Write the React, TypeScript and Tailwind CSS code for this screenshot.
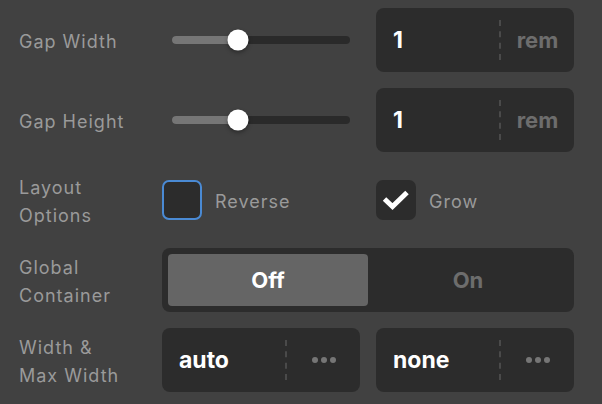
import React, { useState } from "react";

const Label: React.FC<{ children: React.ReactNode }> = ({ children }) => (
  <div className="w-[162px] shrink-0 pl-[19px] pt-[4px] text-[18px] leading-[28px] tracking-[1px] text-[#9a9a9a]">
    {children}
  </div>
);

const Slider: React.FC<{ value: number }> = ({ value }) => (
  <div className="relative mx-[10px] h-[8px] flex-1 rounded-full bg-[#2a2a2a]">
    <div
      className="absolute left-0 top-0 h-full rounded-full bg-[#767676]"
      style={{ width: `${value}%` }}
    />
    <div
      className="absolute top-1/2 h-[21px] w-[21px] -translate-x-1/2 -translate-y-1/2 rounded-full bg-white shadow-[0_2px_4px_rgba(0,0,0,0.35)]"
      style={{ left: `${value}%` }}
    />
  </div>
);

const Divider = () => (
  <div className="h-[40px] border-l-2 border-dashed border-[#4a4a4a]" />
);

const Dots = () => (
  <div className="flex gap-[3px]">
    <span className="h-[6px] w-[6px] rounded-full bg-[#767676]" />
    <span className="h-[6px] w-[6px] rounded-full bg-[#767676]" />
    <span className="h-[6px] w-[6px] rounded-full bg-[#767676]" />
  </div>
);

const Field: React.FC<{ value: string; unit?: string }> = ({ value, unit }) => (
  <div className="flex h-[64px] flex-1 items-center rounded-[8px] bg-[#2c2c2c]">
    <div className="flex-1 pl-[17px] text-[23px] font-bold text-white">{value}</div>
    <Divider />
    <div className="flex w-[73px] items-center justify-center text-[22px] font-bold text-[#6d6d6d]">
      {unit ? unit : <Dots />}
    </div>
  </div>
);

const Check: React.FC<{ checked: boolean; focus?: boolean; label: string; onClick: () => void }> = ({
  checked,
  focus,
  label,
  onClick,
}) => (
  <button className="flex flex-1 items-center gap-[13px]" onClick={onClick}>
    <span
      className={`flex h-[40px] w-[40px] items-center justify-center rounded-[7px] bg-[#2c2c2c] ${
        focus ? "border-2 border-[#4a8ad4]" : ""
      }`}
    >
      {checked && (
        <svg width="40" height="40" viewBox="0 0 40 40">
          <polyline
            points="8.5,19 16.5,26.5 31,12.5"
            fill="none"
            stroke="white"
            strokeWidth="5"
            strokeLinejoin="miter"
          />
        </svg>
      )}
    </span>
    <span className="pt-[2px] text-[18px] tracking-[1px] text-[#9a9a9a]">{label}</span>
  </button>
);

export default function App() {
  const [reverse, setReverse] = useState(false);
  const [grow, setGrow] = useState(true);
  const [global, setGlobal] = useState(false);

  return (
    <div
      className="flex h-[404px] w-[602px] flex-col gap-[16px] bg-[#414141] pt-[8px] pr-[28px]"
      style={{ fontFamily: "Inter, 'Noto Sans', sans-serif" }}
    >
      <div className="flex h-[64px] items-center">
        <Label>Gap Width</Label>
        <div className="flex flex-1 gap-[16px]">
          <div className="flex flex-1 items-center">
            <Slider value={37} />
          </div>
          <Field value="1" unit="rem" />
        </div>
      </div>

      <div className="flex h-[64px] items-center">
        <Label>Gap Height</Label>
        <div className="flex flex-1 gap-[16px]">
          <div className="flex flex-1 items-center">
            <Slider value={37} />
          </div>
          <Field value="1" unit="rem" />
        </div>
      </div>

      <div className="flex h-[64px] items-center">
        <Label>
          Layout
          <br />
          Options
        </Label>
        <div className="flex flex-1 gap-[16px]">
          <Check checked={reverse} focus label="Reverse" onClick={() => setReverse(!reverse)} />
          <Check checked={grow} label="Grow" onClick={() => setGrow(!grow)} />
        </div>
      </div>

      <div className="flex h-[64px] items-center">
        <Label>
          Global
          <br />
          Container
        </Label>
        <div className="flex h-[64px] flex-1 rounded-[8px] bg-[#2c2c2c] p-[6px]">
          <button
            className={`flex-1 rounded-[4px] text-[22px] font-bold ${
              !global ? "bg-[#656565] text-white" : "text-[#6d6d6d]"
            }`}
            onClick={() => setGlobal(false)}
          >
            Off
          </button>
          <button
            className={`flex-1 rounded-[4px] text-[22px] font-bold ${
              global ? "bg-[#656565] text-white" : "text-[#6d6d6d]"
            }`}
            onClick={() => setGlobal(true)}
          >
            On
          </button>
        </div>
      </div>

      <div className="flex h-[64px] items-center">
        <Label>
          Width &amp;
          <br />
          Max Width
        </Label>
        <div className="flex flex-1 gap-[16px]">
          <Field value="auto" />
          <Field value="none" />
        </div>
      </div>
    </div>
  );
}
